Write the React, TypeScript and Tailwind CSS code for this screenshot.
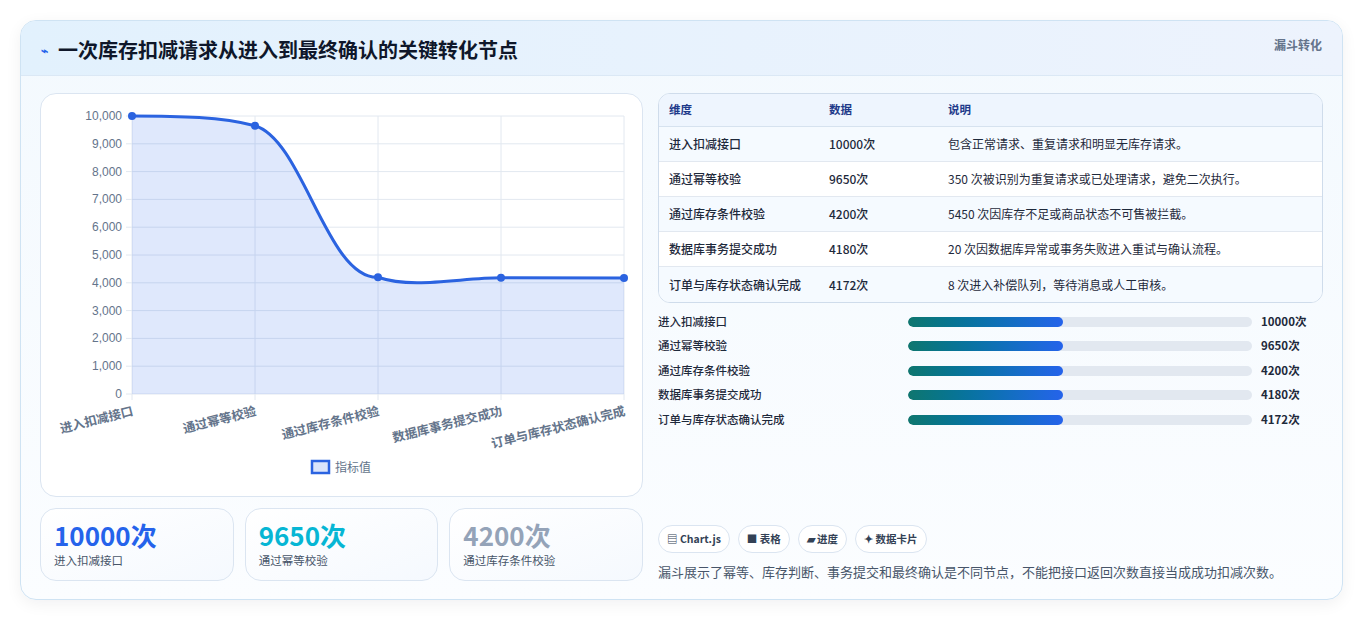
import React from "react";

const F = { fontFamily: '"Noto Sans CJK SC", "Liberation Sans", sans-serif' };

const rows = [
  ["进入扣减接口", "10000次", "包含正常请求、重复请求和明显无库存请求。"],
  ["通过幂等校验", "9650次", "350 次被识别为重复请求或已处理请求，避免二次执行。"],
  ["通过库存条件校验", "4200次", "5450 次因库存不足或商品状态不可售被拦截。"],
  ["数据库事务提交成功", "4180次", "20 次因数据库异常或事务失败进入重试与确认流程。"],
  ["订单与库存状态确认完成", "4172次", "8 次进入补偿队列，等待消息或人工审核。"],
];

function Chart() {
  const L = 91, R = 583, T = 22, B = 300;
  const xs = [91, 214, 337, 460, 583];
  const vals = [10000, 9650, 4200, 4180, 4172];
  const ys = vals.map((v) => B - (v / 10000) * (B - T));
  const curve = `M91 ${ys[0]} C140 ${ys[0]} 180 ${ys[0] + 1} 214 ${ys[1]} C262 ${ys[1] + 14} 286 ${ys[2] + 2} 337 ${ys[2]} C372 ${ys[2] + 12} 420 ${ys[3]} 460 ${ys[3]} C500 ${ys[3]} 540 ${ys[4]} 583 ${ys[4]}`;
  const names = rows.map((r) => r[0]);
  return (
    <svg width="600" height="401" viewBox="0 0 600 401" style={F}>
      {Array.from({ length: 11 }).map((_, i) => {
        const y = T + (i * (B - T)) / 10;
        return (
          <g key={i}>
            <line x1={L - 6} x2={R} y1={y} y2={y} stroke="#e2e8f0" />
            <text x={L - 10} y={y + 4} fontSize="12" fill="#64748b" textAnchor="end" fontFamily="Liberation Sans">
              {(10000 - i * 1000).toLocaleString("en-US")}
            </text>
          </g>
        );
      })}
      {xs.map((x) => (
        <line key={x} x1={x} x2={x} y1={T} y2={B + 6} stroke="#e2e8f0" />
      ))}
      <path d={`${curve} L583 ${B} L91 ${B} Z`} fill="rgba(37,99,235,0.15)" />
      <path d={curve} fill="none" stroke="#2b63e0" strokeWidth="3" />
      {xs.map((x, i) => (
        <circle key={x} cx={x} cy={ys[i]} r="4" fill="#2b63e0" />
      ))}
      {xs.map((x, i) => (
        <text key={i} x={x + 2} y={B + 21} fontSize="12.5" fontWeight="bold" fill="#64748b" textAnchor="end" transform={`rotate(-14 ${x + 2} ${B + 21})`}>
          {names[i]}
        </text>
      ))}
      <rect x="271" y="367" width="17" height="12" fill="#dbe5fb" stroke="#2b63e0" strokeWidth="2.5" />
      <text x="294" y="378" fontSize="12" fill="#64748b">指标值</text>
    </svg>
  );
}

export default function App() {
  return (
    <div style={F} className="w-[1363px] h-[621px] bg-white p-[20px] pb-[21px]">
      <div className="h-full rounded-2xl border border-[#cfe3f3] bg-gradient-to-b from-[#f3f9fe] to-[#fbfdff] shadow-[0_4px_16px_rgba(15,23,42,0.06)] overflow-hidden flex flex-col">
        <div className="h-[55px] shrink-0 flex items-start justify-between px-[20px] bg-gradient-to-r from-[#e2f1fd] to-[#edf3fd] border-b border-[#dbe8f5]">
          <div className="flex items-center gap-[10px] mt-[14px]">
            <span className="text-[#2563eb] text-[12px] font-bold">⌁</span>
            <h1 className="text-[20px] font-bold text-[#0f172a]">一次库存扣减请求从进入到最终确认的关键转化节点</h1>
          </div>
          <span className="mt-[15px] text-[12px] font-bold text-[#64748b]">漏斗转化</span>
        </div>
        <div className="flex-1 flex gap-[15px] px-[19px] pt-[17px] pb-[18px]">
          <div className="w-[603px] flex flex-col gap-[11px]">
            <div className="h-[404px] rounded-2xl border border-[#dbe5f1] bg-white">
              <Chart />
            </div>
            <div className="grid grid-cols-3 gap-[11px]">
              {[
                ["10000次", "进入扣减接口", "text-[#2563eb]"],
                ["9650次", "通过幂等校验", "text-[#06b6d4]"],
                ["4200次", "通过库存条件校验", "text-[#94a3b8]"],
              ].map(([v, l, c]) => (
                <div key={l} className="h-[73px] rounded-2xl border border-[#dbe5f1] bg-gradient-to-br from-white to-[#f5f9fe] px-[13px] pt-[10px]">
                  <div className={`text-[26px] leading-[32px] font-bold ${c}`}>{v}</div>
                  <div className="text-[11.5px] text-[#475569] mt-[1px]">{l}</div>
                </div>
              ))}
            </div>
          </div>
          <div className="flex-1 flex flex-col">
            <div className="rounded-xl border border-[#cfdceb] bg-white overflow-hidden">
              <div className="grid grid-cols-[160px_119px_1fr] h-[33px] items-center px-[10px] bg-[#eef5fe] border-b border-[#d6e2ef] text-[11.5px] font-bold text-[#1e3a8a]">
                <div>维度</div><div>数据</div><div>说明</div>
              </div>
              {rows.map((r, i) => (
                <div key={i} className={`grid grid-cols-[160px_119px_1fr] h-[35px] items-center px-[10px] text-[12px] text-[#1e293b] ${i % 2 === 0 ? "bg-[#f5faff]" : "bg-white"} ${i < 4 ? "border-b border-[#e2e8f0]" : ""}`}>
                  <div className="font-medium">{r[0]}</div>
                  <div className="font-medium">{r[1]}</div>
                  <div>{r[2]}</div>
                </div>
              ))}
            </div>
            <div className="mt-[11px] flex flex-col gap-[9.5px]">
              {rows.map((r) => (
                <div key={r[0]} className="flex items-center h-[15px] text-[11.5px] font-medium text-[#1e293b]">
                  <div className="w-[250px]">{r[0]}</div>
                  <div className="w-[344px] h-[10px] rounded-full bg-[#e2e8f0] overflow-hidden">
                    <div className="h-full w-[45%] rounded-full bg-gradient-to-r from-[#0f766e] to-[#2563eb]" />
                  </div>
                  <div className="ml-[9px] font-bold">{r[1]}</div>
                </div>
              ))}
            </div>
            <div className="mt-auto flex gap-[8px]">
              {["▤ Chart.js", "■ 表格", "▰ 进度", "✦ 数据卡片"].map((t) => (
                <span key={t} className="h-[28px] px-[8px] flex items-center rounded-full border border-[#dbe5f1] bg-white text-[10.5px] font-bold text-[#334155]">{t}</span>
              ))}
            </div>
            <p className="mt-[9px] text-[13px] text-[#475569]">漏斗展示了幂等、库存判断、事务提交和最终确认是不同节点，不能把接口返回次数直接当成成功扣减次数。</p>
          </div>
        </div>
      </div>
    </div>
  );
}
